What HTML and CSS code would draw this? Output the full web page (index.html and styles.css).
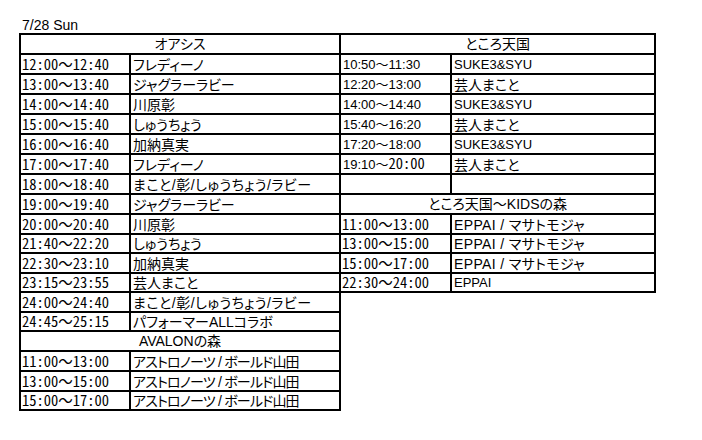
FILE: index.html
```html
<!DOCTYPE html>
<html lang="ja">
<head>
<meta charset="utf-8">
<title>7/28 Sun</title>
<link rel="stylesheet" href="styles.css">
</head>
<body>
<div class="page">
  <div class="date">7/28 Sun</div>
  <table class="sched">
    <colgroup>
      <col class="c1"><col class="c2"><col class="c3"><col class="c4">
    </colgroup>
    <tr class="r0"><td class="hd first" colspan="2">オアシス</td><td class="hd" colspan="2">ところ天国</td></tr>
    <tr class="r20"><td class="tm first">12:00～12:40</td><td>フレディーノ</td><td class="pt">10:50～11:30</td><td class="lt">SUKE3&amp;SYU</td></tr>
    <tr class="r20"><td class="tm first">13:00～13:40</td><td>ジャグラーラビー</td><td class="pt">12:20～13:00</td><td>芸人まこと</td></tr>
    <tr class="r20"><td class="tm first">14:00～14:40</td><td>川原彰</td><td class="pt">14:00～14:40</td><td class="lt">SUKE3&amp;SYU</td></tr>
    <tr class="r20"><td class="tm first">15:00～15:40</td><td>しゅうちょう</td><td class="pt">15:40～16:20</td><td>芸人まこと</td></tr>
    <tr class="r20"><td class="tm first">16:00～16:40</td><td>加納真実</td><td class="pt">17:20～18:00</td><td class="lt">SUKE3&amp;SYU</td></tr>
    <tr class="r20"><td class="tm first">17:00～17:40</td><td>フレディーノ</td><td class="pt">19:10～<span class="hw">20:00</span></td><td>芸人まこと</td></tr>
    <tr class="r20"><td class="tm first">18:00～18:40</td><td class="wide">まこと/彰/しゅうちょう/ラビー</td><td></td><td></td></tr>
    <tr class="r20"><td class="tm first">19:00～19:40</td><td>ジャグラーラビー</td><td class="hd" colspan="2">ところ天国～KIDSの森</td></tr>
    <tr class="r20"><td class="tm first">20:00～20:40</td><td>川原彰</td><td class="tm">11:00～13:00</td><td class="mid">EPPAI / マサトモジャ</td></tr>
    <tr class="r19"><td class="tm first">21:40～22:20</td><td>しゅうちょう</td><td class="tm">13:00～15:00</td><td class="mid">EPPAI / マサトモジャ</td></tr>
    <tr class="r20"><td class="tm first">22:30～23:10</td><td>加納真実</td><td class="tm">15:00～17:00</td><td class="mid">EPPAI / マサトモジャ</td></tr>
    <tr class="r19"><td class="tm first">23:15～23:55</td><td>芸人まこと</td><td class="tm">22:30～24:00</td><td class="lt">EPPAI</td></tr>
    <tr class="r20"><td class="tm first">24:00～24:40</td><td class="wide">まこと/彰/しゅうちょう/ラビー</td></tr>
    <tr class="r19"><td class="tm first">24:45～25:15</td><td>パフォーマーALLコラボ</td></tr>
    <tr class="r20"><td class="hd first" colspan="2">AVALONの森</td></tr>
    <tr class="r20"><td class="tm first">11:00～13:00</td><td class="tight">アストロノーツ / ボールド山田</td></tr>
    <tr class="r20"><td class="tm first">13:00～15:00</td><td class="tight">アストロノーツ / ボールド山田</td></tr>
    <tr class="r19"><td class="tm first">15:00～17:00</td><td class="tight">アストロノーツ / ボールド山田</td></tr>
  </table>
</div>
</body>
</html>
```

FILE: styles.css
```css
body {
  margin: 0;
  background: #fff;
  color: #000;
  font-family: "Liberation Sans", "Noto Sans CJK JP", sans-serif;
  font-size: 14px;
}

.page {
  padding: 17px 0 0 19px;
}

.date {
  line-height: 16px;
  padding-left: 3px;
}

.sched {
  border-collapse: separate;
  border-spacing: 0;
  table-layout: fixed;
  width: 637px;
}

.c1 { width: 112px; }
.c2 { width: 210px; }
.c3 { width: 111px; }
.c4 { width: 204px; }

.sched tr.r0 { height: 22px; }
.sched tr.r20 { height: 20px; }
.sched tr.r19 { height: 19px; }

.sched td {
  border-right: 2px solid #000;
  border-bottom: 2px solid #000;
  padding: 0 0 1px 2px;
  line-height: 14px;
  vertical-align: bottom;
  white-space: nowrap;
  font-feature-settings: "palt";
}

.sched tr.r0 td {
  border-top: 2px solid #000;
}

.sched td.first {
  border-left: 2px solid #000;
}

.sched td.hd {
  text-align: center;
  padding-left: 0;
  padding-bottom: 2px;
}

.sched td.tm,
.sched .hw {
  font-family: "Noto Sans Mono CJK JP", "Noto Sans CJK JP", sans-serif;
  font-feature-settings: normal;
  font-size: 14.5px;
}

.sched td.tm {
  padding-left: 1px;
  padding-bottom: 2px;
}

.sched td.pt,
.sched td.lt {
  font-size: 13px;
}

.sched td.tight {
  letter-spacing: -0.8px;
}

.sched td.wide {
  letter-spacing: 0.5px;
}

.sched td.mid {
  letter-spacing: 0.35px;
}
```
